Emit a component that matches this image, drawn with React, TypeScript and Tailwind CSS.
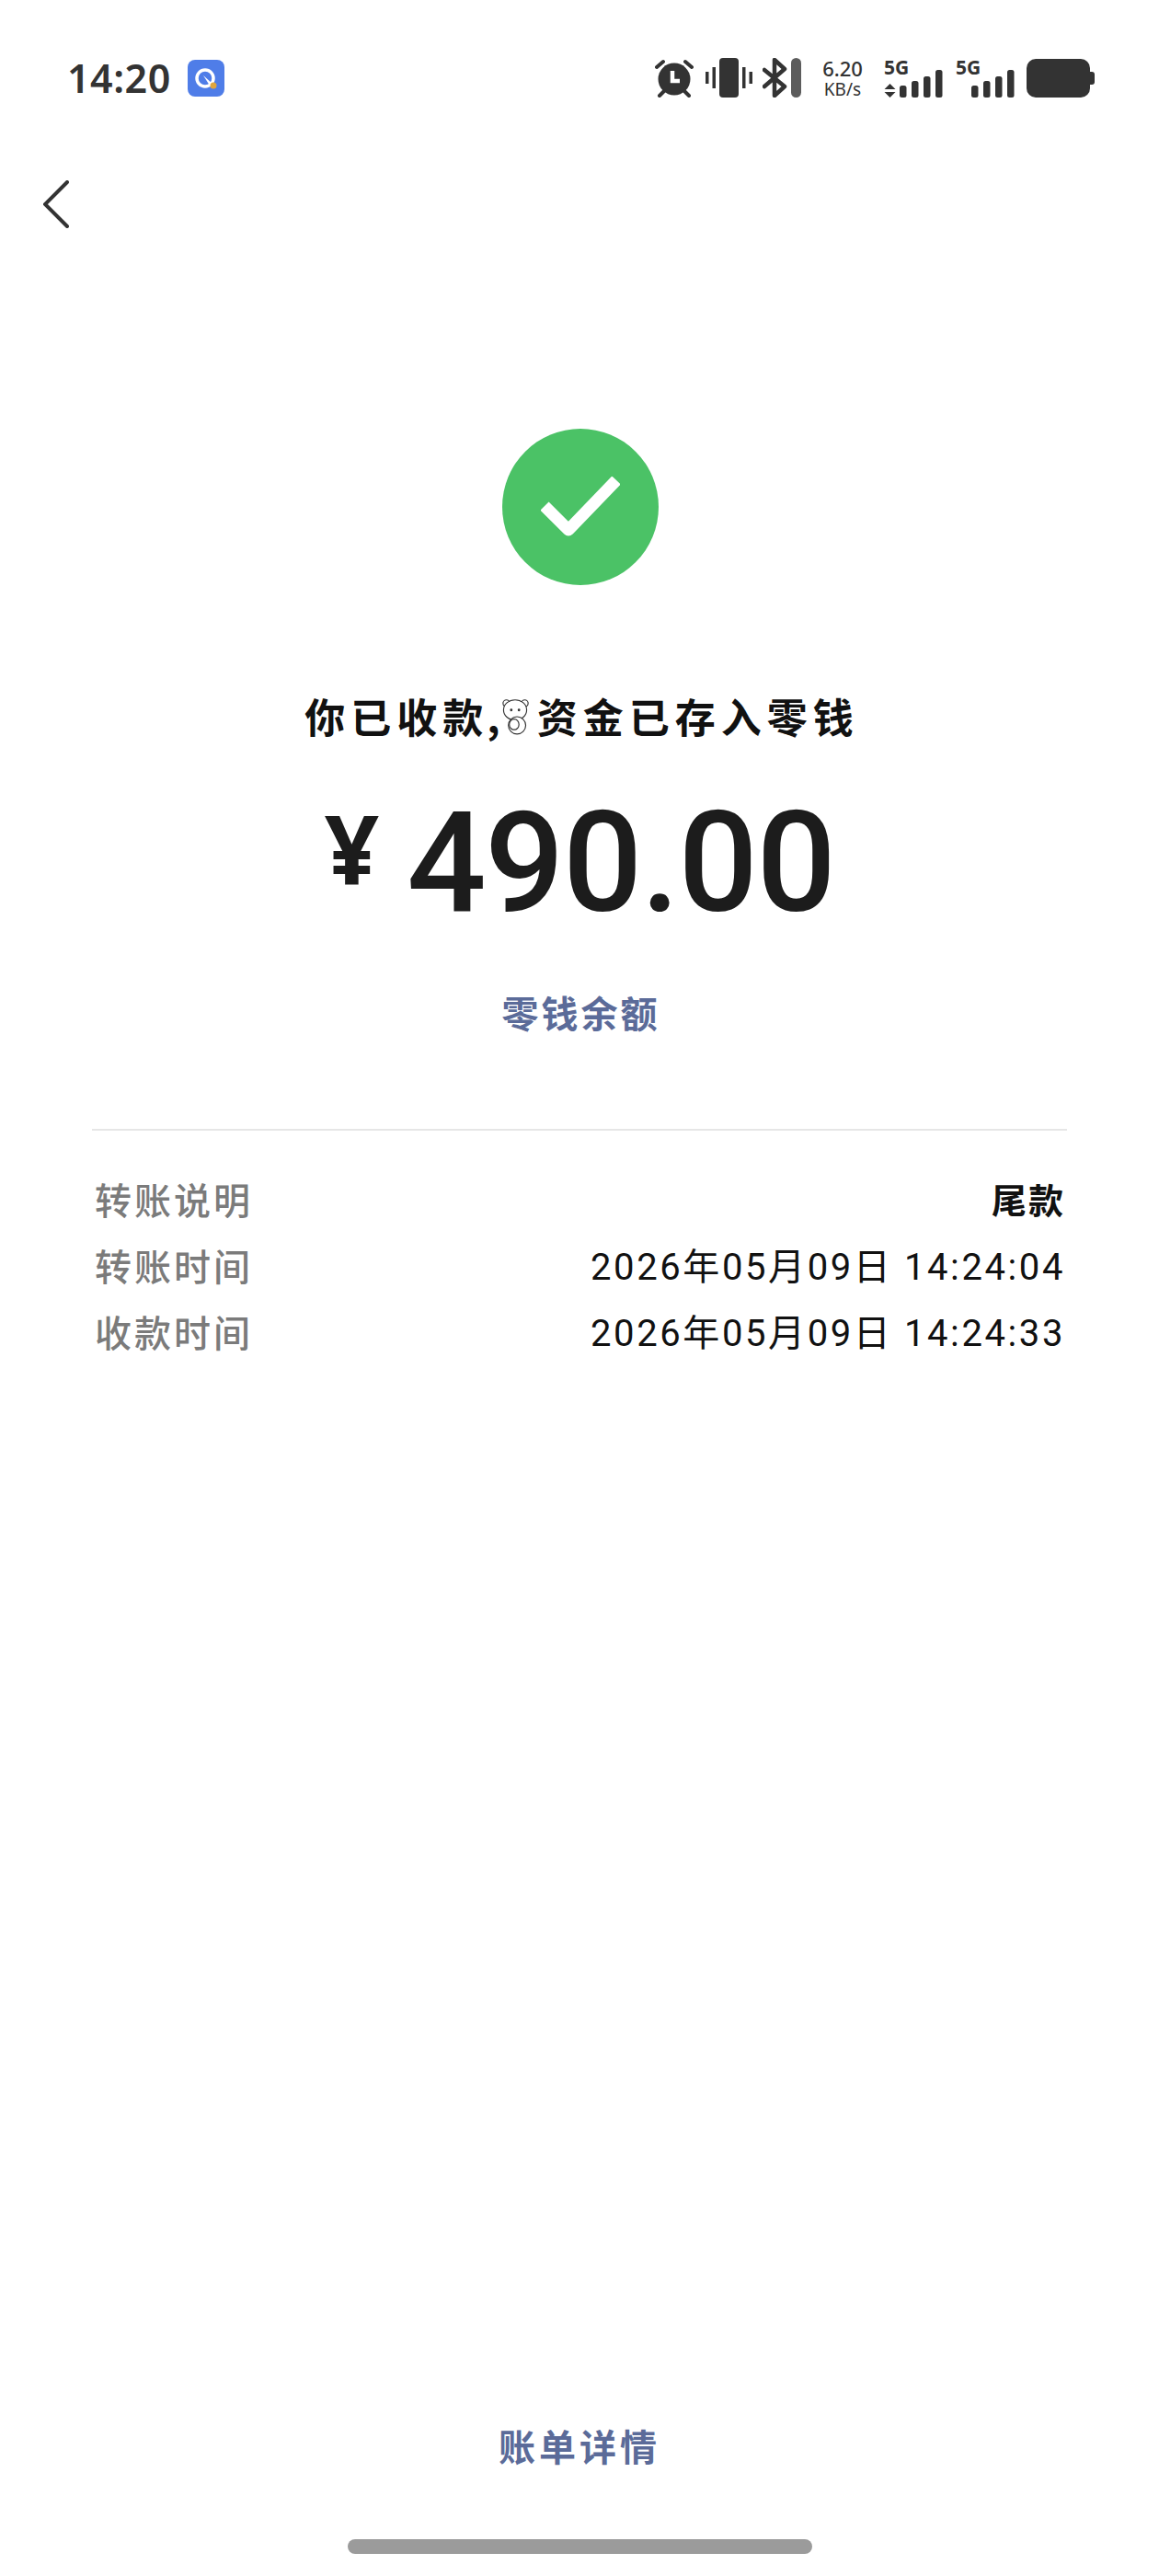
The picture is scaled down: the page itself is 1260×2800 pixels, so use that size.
const cjk = "font-['Noto_Sans_CJK_SC','Noto_Sans',sans-serif]";

function AppBadge() {
  return (
    <svg width="40" height="40" viewBox="0 0 40 40">
      <rect width="40" height="40" rx="8" fill="#4f7de8" />
      <circle cx="19" cy="20" r="9" fill="none" stroke="#fff" strokeWidth="3.5" />
      <path d="M17 17l10 9-3 2z" fill="#fff" />
      <circle cx="28" cy="28" r="3.5" fill="#e0a53e" />
    </svg>
  );
}

function AlarmIcon() {
  return (
    <svg width="42" height="43" viewBox="0 0 42 43">
      <circle cx="21" cy="23" r="17.5" fill="#333" />
      <path d="M19 14v11h8" fill="none" stroke="#fff" strokeWidth="4.5" />
      <path d="M2 10l7-6M40 10l-7-6M5 41l5-5M37 41l-5-5" stroke="#333" strokeWidth="4" strokeLinecap="round" />
    </svg>
  );
}

function VibrateIcon() {
  return (
    <svg width="51" height="43" viewBox="0 0 51 43">
      <rect x="15" y="0" width="21" height="43" rx="4" fill="#333" />
      <rect x="0" y="15" width="3.5" height="13" fill="#333" />
      <rect x="7.5" y="10" width="3.5" height="23" fill="#333" />
      <rect x="40" y="10" width="3.5" height="23" fill="#333" />
      <rect x="47.5" y="15" width="3.5" height="13" fill="#333" />
    </svg>
  );
}

function BluetoothIcon() {
  return (
    <svg width="28" height="43" viewBox="0 0 28 43">
      <path d="M2 13l22 18-11 10V2l11 10L2 31" fill="none" stroke="#333" strokeWidth="4.5" strokeLinejoin="round" strokeLinecap="round" />
    </svg>
  );
}

function Bars() {
  return (
    <svg width="47" height="30" viewBox="0 0 47 30">
      <rect x="0" y="17" width="7.5" height="13" rx="2.5" fill="#333" />
      <rect x="13" y="12" width="7.5" height="18" rx="2.5" fill="#333" />
      <rect x="26" y="7" width="7.5" height="23" rx="2.5" fill="#333" />
      <rect x="39" y="0" width="7.5" height="30" rx="2.5" fill="#333" />
    </svg>
  );
}

function Signal({ arrows }: { arrows?: boolean }) {
  return (
    <div className="flex items-end">
      <div className="flex h-[43px] w-[17px] flex-col justify-between">
        <span className="whitespace-nowrap font-['Noto_Sans',sans-serif] text-[21px] leading-[20px] font-bold text-[#333]">5G</span>
        {arrows && (
          <svg width="13" height="15" viewBox="0 0 13 15">
            <path d="M6.5 0l6 6h-12zM6.5 15l-6-6h12z" fill="#333" />
          </svg>
        )}
      </div>
      <Bars />
    </div>
  );
}

function Battery() {
  return (
    <div className="flex items-center">
      <div className="h-[42px] w-[69px] rounded-[10px] bg-[#333]" />
      <div className="h-[14px] w-[5px] rounded-r-[3px] bg-[#333]" />
    </div>
  );
}

// Small line-drawn bear that sits inside the headline
function Bear() {
  return (
    <svg width="32" height="44" viewBox="0 0 30 42" fill="#fff" stroke="#333" strokeWidth="1.1">
      <circle cx="6" cy="8" r="3.5" />
      <circle cx="25" cy="8" r="3.5" />
      <ellipse cx="15" cy="15" rx="12" ry="10.5" />
      <ellipse cx="17" cy="31" rx="9" ry="9" />
      <ellipse cx="14" cy="30" rx="5" ry="5.5" />
      <circle cx="11" cy="15" r="0.8" fill="#333" />
      <circle cx="19" cy="15" r="0.8" fill="#333" />
    </svg>
  );
}

function DetailRow({ label, value, strong }: { label: string; value: string; strong?: boolean }) {
  return (
    <div className="flex h-[72px] items-center justify-between">
      <span className={`${cjk} text-[40px] leading-none font-medium tracking-[3px] text-[#7b7b7b]`}>{label}</span>
      {strong ? (
        <span className={`${cjk} text-[38px] leading-none font-bold tracking-[2px] text-[#111]`}>{value}</span>
      ) : (
        <span className="mt-[5px] font-['Roboto','Noto_Sans_CJK_SC',sans-serif] text-[40px] leading-none tracking-[2.6px] text-[#111]">{value}</span>
      )}
    </div>
  );
}

export default function App() {
  return (
    <div className="flex h-[2800px] w-[1260px] flex-col bg-white">
      <div className="mt-[63px] flex h-[64px] items-start justify-between pr-[70px] pl-[73px]">
        <div className="flex items-center gap-[18px]">
          <span className="font-['Noto_Sans',sans-serif] text-[43px] leading-[44px] font-semibold tracking-[0.5px] text-[#333]">14:20</span>
          <AppBadge />
        </div>
        <div className="flex items-center">
          <AlarmIcon />
          <div className="ml-[13px]"><VibrateIcon /></div>
          <div className="ml-[11px]"><BluetoothIcon /></div>
          <div className="ml-[3px] h-[43px] w-[11px] rounded-full bg-[#5c5c5c]" />
          <div className="ml-[22px] flex w-[46px] flex-col items-center gap-[2px] text-[#333]">
            <span className="font-['Noto_Sans',sans-serif] text-[22px] leading-[23px] font-medium">6.20</span>
            <span className="font-['Noto_Sans',sans-serif] text-[19px] leading-[18px]">KB/s</span>
          </div>
          <div className="ml-[22px]"><Signal arrows /></div>
          <div className="ml-[14px]"><Signal /></div>
          <div className="ml-[13px]"><Battery /></div>
        </div>
      </div>

      <div className="mt-[69px] pl-[47px]">
        <svg width="28" height="52" viewBox="0 0 28 52" fill="none" stroke="#333" strokeWidth="4" strokeLinecap="round">
          <path d="M26 2L2 26l24 24" />
        </svg>
      </div>

      <div className="flex flex-col items-center">
        <div className="mt-[218px] ml-[2px] flex size-[170px] items-center justify-center rounded-full bg-[#4bc266]">
          <svg width="86" height="66" viewBox="0 0 86 66" fill="none" stroke="#fff" strokeWidth="13" strokeLinejoin="round">
            <path d="M4 32l26 26L82 4" />
          </svg>
        </div>
        <div className={`${cjk} mt-[116px] ml-[5px] flex h-[52px] items-center text-[44px] leading-none font-bold tracking-[6px] text-[#111]`}>
          <span>你已收款</span>
          <span className="-ml-[2px] tracking-normal">,</span>
          <Bear />
          <span className="ml-[8px]">资金已存入零钱</span>
        </div>
        <div className="mt-[59px] flex items-start text-[#1c1c1c]">
          <span className="mt-[12px] mr-[30px] font-['Noto_Sans',sans-serif] text-[104px] leading-[92px] font-bold">¥</span>
          <span className="font-['Roboto',sans-serif] text-[152px] leading-[150px] font-medium tracking-[-1.5px]">490.00</span>
        </div>
        <div className={`${cjk} mt-[62px] ml-[3px] text-[40px] leading-[50px] font-bold tracking-[3px] text-[#5b6b99]`}>零钱余额</div>
      </div>

      <div className="mx-[100px] mt-[102px] h-[2px] bg-[#e6e6e6]" />

      <div className="mt-[38px] pr-[102px] pl-[103px]">
        <DetailRow label="转账说明" value="尾款" strong />
        <DetailRow label="转账时间" value="2026年05月09日 14:24:04" />
        <DetailRow label="收款时间" value="2026年05月09日 14:24:33" />
      </div>

      <div className="mt-auto flex flex-col items-center">
        <div className={`${cjk} text-[40px] leading-[50px] font-bold tracking-[4px] text-[#5b6b99]`}>账单详情</div>
        <div className="mt-[77px] mb-[24px] h-[16px] w-[505px] rounded-full bg-[#9b9b9b]" />
      </div>
    </div>
  );
}
